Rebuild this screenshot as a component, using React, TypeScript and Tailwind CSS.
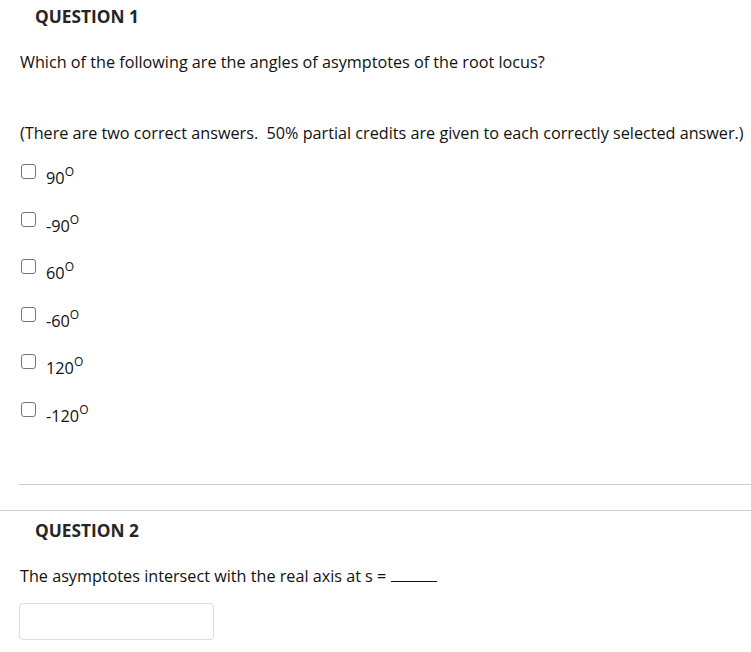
const options = ["90", "-90", "60", "-60", "120", "-120"];

function Checkbox() {
  return (
    <span className="inline-block mt-[7px] w-[15px] h-[15px] shrink-0 rounded-[3px] border border-[#767676] bg-white" />
  );
}

export default function App() {
  return (
    <div
      className="w-[751px] h-[652px] bg-white text-[#111] text-[16.2px] overflow-hidden"
      style={{ fontFamily: '"Open Sans", sans-serif' }}
    >
      <div className="pl-[35px] pt-[5px] h-[26px]">
        <h2 className="text-[17.3px] font-bold leading-[24px] text-[#262626]">QUESTION 1</h2>
      </div>

      <p className="pl-[20px] mt-[24px] leading-[24px]">
        Which of the following are the angles of asymptotes of the root locus?
      </p>

      <p className="pl-[20px] mt-[47px] leading-[24px] whitespace-pre">
        (There are two correct answers.  50% partial credits are given to each correctly selected answer.)
      </p>

      <ul className="pl-[21px] mt-[12px] flex flex-col gap-[23.6px]">
        {options.map((o) => (
          <li key={o} className="flex items-start h-[24px] gap-[10px]">
            <Checkbox />
            <span className="leading-[24px] text-[16.3px] mt-[9px]">
              {o}
              <sup className="text-[12px] -top-[8px]">O</sup>
            </span>
          </li>
        ))}
      </ul>

      <div className="ml-[19px] mt-[65px] border-t border-[#cfcfcf]" />
      <div className="mt-[25px] border-t border-[#cfcfcf]" />

      <div className="pl-[35px] pt-[8px]">
        <h2 className="text-[17.3px] font-bold leading-[24px] text-[#262626]">QUESTION 2</h2>
      </div>

      <p className="pl-[20px] mt-[21px] leading-[24px]">
        The asymptotes intersect with the real axis at s ={" "}
        <span className="inline-block w-[46px] h-[13px] border-b border-[#111] align-baseline" />
      </p>

      <div className="ml-[19px] mt-[15px] w-[195px] h-[37px] rounded-[4px] border border-[#dcdcdc] bg-white" />
    </div>
  );
}
